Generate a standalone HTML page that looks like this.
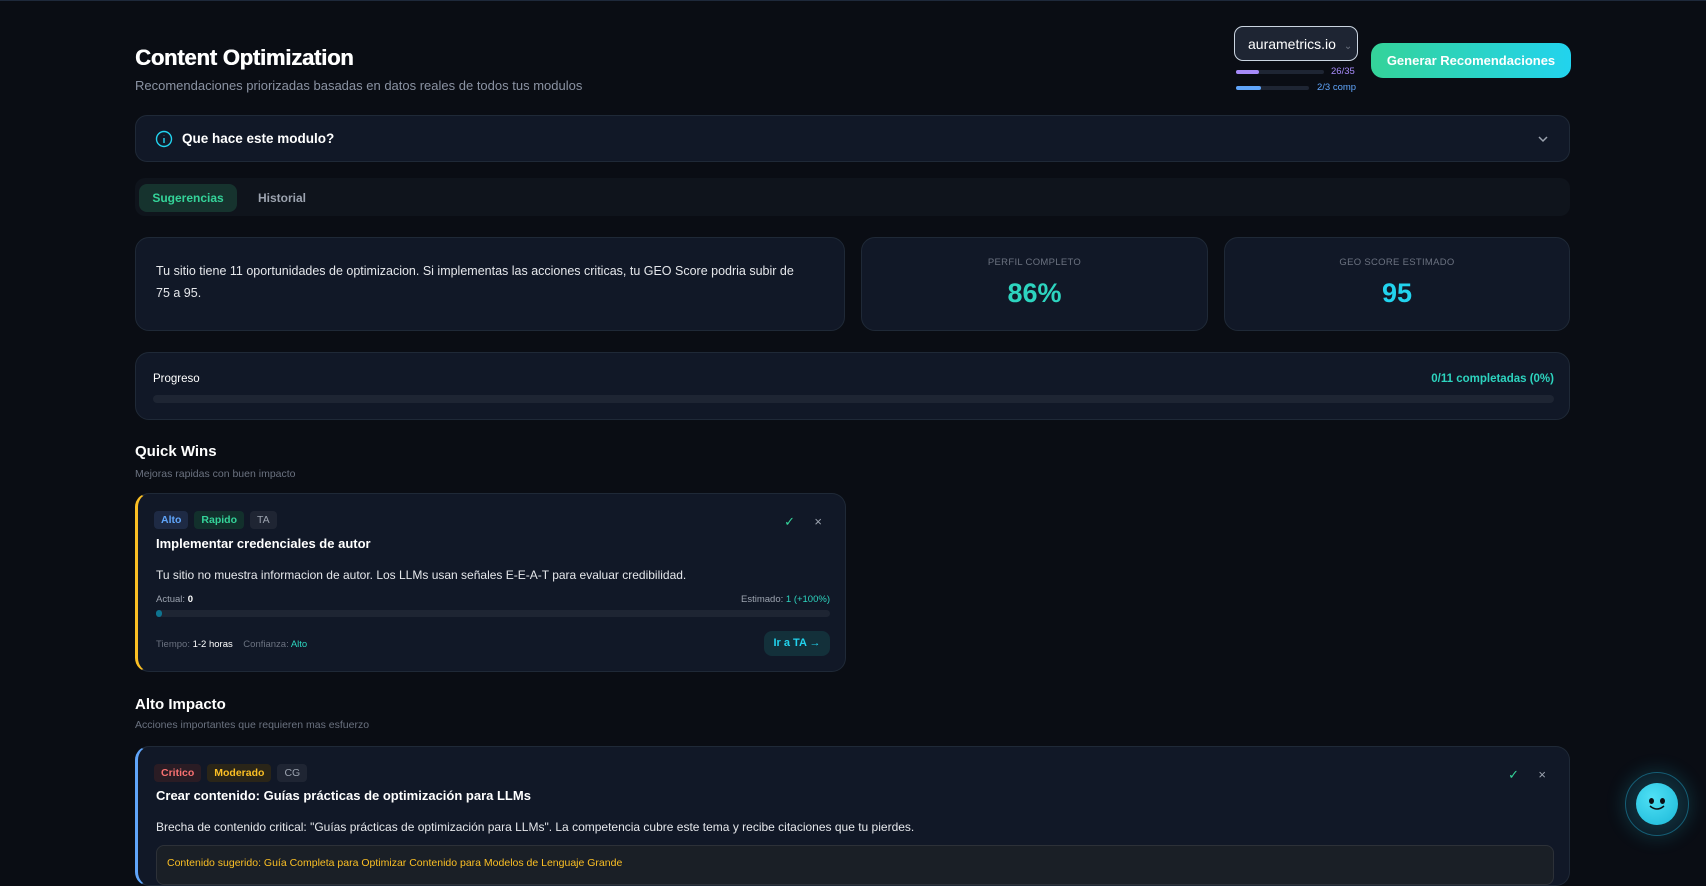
<!DOCTYPE html>
<html><head><meta charset="utf-8"><style>
*{box-sizing:border-box;margin:0;padding:0}
body{width:1706px;height:862px;overflow:hidden;background:#0a0d14;font-family:"Liberation Sans",sans-serif;color:#e5e7eb;position:relative;border-top:1px solid #1e293b}
.a{position:absolute}
.card{position:absolute;background:#111827;border:1px solid #1f2937;border-radius:14px}
.tag{display:inline-block;font-size:10.5px;padding:3px 7px;border-radius:4px;margin-right:6px;font-weight:bold}
</style></head><body>
<div class="a" style="left:135px;top:44px;font-size:22px;font-weight:bold;color:#fff;letter-spacing:-.2px;text-shadow:0.5px 0 0 #fff">Content Optimization</div>
<div class="a" style="left:135px;top:77px;font-size:13px;color:#8b93a3">Recomendaciones priorizadas basadas en datos reales de todos tus modulos</div>

<div class="a" style="left:1234px;top:25px;width:124px;height:35px;border:1px solid #cbd5e1;border-radius:9px;background:#1e2533;font-size:14px;color:#fff;padding:9px 0 0 13px">aurametrics.io <span style="color:#6b7280;font-size:10px;margin-left:4px">⌄</span></div>
<div class="a" style="left:1236px;top:69px;width:88px;height:4px;background:#1e2533;border-radius:2px"><div style="width:23px;height:4px;background:#a78bfa;border-radius:2px"></div></div>
<div class="a" style="left:1331px;top:65px;font-size:9.5px;color:#a78bfa">26/35</div>
<div class="a" style="left:1236px;top:85px;width:73px;height:4px;background:#1e2533;border-radius:2px"><div style="width:25px;height:4px;background:#60a5fa;border-radius:2px"></div></div>
<div class="a" style="left:1317px;top:81px;font-size:9.5px;color:#60a5fa">2/3 comp</div>
<div class="a" style="left:1371px;top:42px;width:200px;height:35px;border-radius:12px;background:linear-gradient(90deg,#34d399,#22d3ee);color:#fff;font-size:13px;font-weight:bold;text-align:center;line-height:35px">Generar Recomendaciones</div>

<div class="card" style="left:135px;top:114px;width:1435px;height:47px;border-radius:12px">
<svg class="a" style="left:19px;top:14px" width="18" height="18" viewBox="0 0 18 18" fill="none" stroke="#22d3ee" stroke-width="1.4"><circle cx="9" cy="9" r="7.5"/><path d="M9 8v5M9 5.5v.3"/></svg>
<div class="a" style="left:46px;top:15px;font-size:13.5px;font-weight:bold;color:#fff">Que hace este modulo?</div>
<svg class="a" style="right:20px;top:18px" width="12" height="10" viewBox="0 0 12 10" fill="none" stroke="#9ca3af" stroke-width="1.5"><path d="M2 3l4 4 4-4"/></svg>
</div>

<div class="a" style="left:135px;top:177px;width:1435px;height:38px;background:#0f141c;border-radius:10px"></div>
<div class="a" style="left:139px;top:183px;width:98px;height:28px;background:#16332e;border-radius:8px;color:#34d399;font-size:12px;font-weight:bold;text-align:center;line-height:28px">Sugerencias</div>
<div class="a" style="left:258px;top:183px;height:28px;color:#9ca3af;font-size:12px;font-weight:bold;line-height:28px">Historial</div>

<div class="card" style="left:135px;top:236px;width:710px;height:94px">
<div class="a" style="left:20px;top:22px;width:640px;font-size:12.5px;line-height:22px;color:#e5e7eb">Tu sitio tiene 11 oportunidades de optimizacion. Si implementas las acciones criticas, tu GEO Score podria subir de 75 a 95.</div></div>
<div class="card" style="left:861px;top:236px;width:347px;height:94px;text-align:center">
<div style="margin-top:19px;font-size:9.5px;color:#6b7280;letter-spacing:.3px">PERFIL COMPLETO</div>
<div style="margin-top:10px;font-size:27px;font-weight:bold;color:#2dd4bf">86%</div></div>
<div class="card" style="left:1224px;top:236px;width:346px;height:94px;text-align:center">
<div style="margin-top:19px;font-size:9.5px;color:#6b7280;letter-spacing:.3px">GEO SCORE ESTIMADO</div>
<div style="margin-top:10px;font-size:27px;font-weight:bold;color:#22d3ee">95</div></div>

<div class="card" style="left:135px;top:351px;width:1435px;height:68px">
<div class="a" style="left:17px;top:20px;font-size:11.5px;color:#fff">Progreso</div>
<div class="a" style="right:15px;top:20px;font-size:11.5px;color:#2dd4bf;font-weight:bold">0/11 completadas (0%)</div>
<div class="a" style="left:17px;top:42px;right:15px;height:8px;background:#1e2533;border-radius:4px"></div></div>

<div class="a" style="left:135px;top:442px;font-size:15px;font-weight:bold;color:#fff">Quick Wins</div>
<div class="a" style="left:135px;top:467px;font-size:10.5px;color:#6b7280">Mejoras rapidas con buen impacto</div>

<div class="card" style="left:135px;top:492px;width:711px;height:179px;border-left:3px solid #fbbf24">
<div class="a" style="left:16px;top:16px"><span class="tag" style="background:#1e2a44;color:#60a5fa">Alto</span><span class="tag" style="background:#12302c;color:#34d399">Rapido</span><span class="tag" style="background:#1f2533;color:#9ca3af;font-weight:normal">TA</span></div>
<div class="a" style="right:50px;top:20px;color:#34d399;font-size:13px">✓</div>
<div class="a" style="right:23px;top:20px;color:#9ca3af;font-size:13px">×</div>
<div class="a" style="left:18px;top:42px;font-size:13px;font-weight:bold;color:#fff">Implementar credenciales de autor</div>
<div class="a" style="left:18px;top:74px;font-size:12px;color:#e5e7eb">Tu sitio no muestra informacion de autor. Los LLMs usan señales E-E-A-T para evaluar credibilidad.</div>
<div class="a" style="left:18px;top:100px;font-size:9.5px;color:#9ca3af">Actual: <b style="color:#fff">0</b></div>
<div class="a" style="right:15px;top:100px;font-size:9.5px;color:#9ca3af">Estimado: <span style="color:#2dd4bf">1 (+100%)</span></div>
<div class="a" style="left:18px;right:15px;top:116px;height:7px;background:#1e2533;border-radius:4px"><div style="width:6px;height:7px;background:#0e7490;border-radius:4px"></div></div>
<div class="a" style="left:18px;top:145px;font-size:9.5px;color:#6b7280">Tiempo: <span style="color:#fff">1-2 horas</span> &nbsp;&nbsp; Confianza: <span style="color:#2dd4bf">Alto</span></div>
<div class="a" style="right:15px;top:137px;width:66px;height:25px;background:#13303a;border-radius:8px;color:#22d3ee;font-size:11px;font-weight:bold;text-align:center;line-height:25px">Ir a TA →</div>
</div>

<div class="a" style="left:135px;top:695px;font-size:15px;font-weight:bold;color:#fff">Alto Impacto</div>
<div class="a" style="left:135px;top:718px;font-size:10.5px;color:#6b7280">Acciones importantes que requieren mas esfuerzo</div>

<div class="card" style="left:135px;top:745px;width:1435px;height:140px;border-left:3px solid #60a5fa">
<div class="a" style="left:16px;top:16px"><span class="tag" style="background:#2a1c24;color:#f87171">Critico</span><span class="tag" style="background:#2a2518;color:#fbbf24">Moderado</span><span class="tag" style="background:#1f2533;color:#9ca3af;font-weight:normal">CG</span></div>
<div class="a" style="right:50px;top:20px;color:#34d399;font-size:13px">✓</div>
<div class="a" style="right:23px;top:20px;color:#9ca3af;font-size:13px">×</div>
<div class="a" style="left:18px;top:41px;font-size:13px;font-weight:bold;color:#fff">Crear contenido: Guías prácticas de optimización para LLMs</div>
<div class="a" style="left:18px;top:73px;font-size:12px;color:#e5e7eb">Brecha de contenido critical: "Guías prácticas de optimización para LLMs". La competencia cubre este tema y recibe citaciones que tu pierdes.</div>
<div class="a" style="left:18px;top:98px;right:15px;height:40px;background:#1a1f26;border:1px solid #2d3138;border-radius:8px;padding:11px 0 0 10px;font-size:10.5px;color:#fbbf24">Contenido sugerido: Guía Completa para Optimizar Contenido para Modelos de Lenguaje Grande</div>
</div>

<div class="a" style="left:1625px;top:771px;width:64px;height:64px;border-radius:50%;border:1px solid #155e75;background:radial-gradient(circle,#0e2a36 50%,#0a1520 100%);box-shadow:0 0 20px rgba(34,211,238,.2)"></div>
<div class="a" style="left:1636px;top:782px;width:42px;height:42px;border-radius:50%;background:radial-gradient(circle at 40% 35%,#4fe0f5,#1bb8d8)">
<div class="a" style="left:13px;top:15px;width:5px;height:6px;border-radius:50%;background:#0a0d14"></div>
<div class="a" style="left:24px;top:15px;width:5px;height:6px;border-radius:50%;background:#0a0d14"></div>
<svg class="a" style="left:13px;top:22px" width="16" height="6" viewBox="0 0 16 6" fill="none" stroke="#0a0d14" stroke-width="1.5"><path d="M1 1q7 6 14 0"/></svg>
</div>
</body></html>
